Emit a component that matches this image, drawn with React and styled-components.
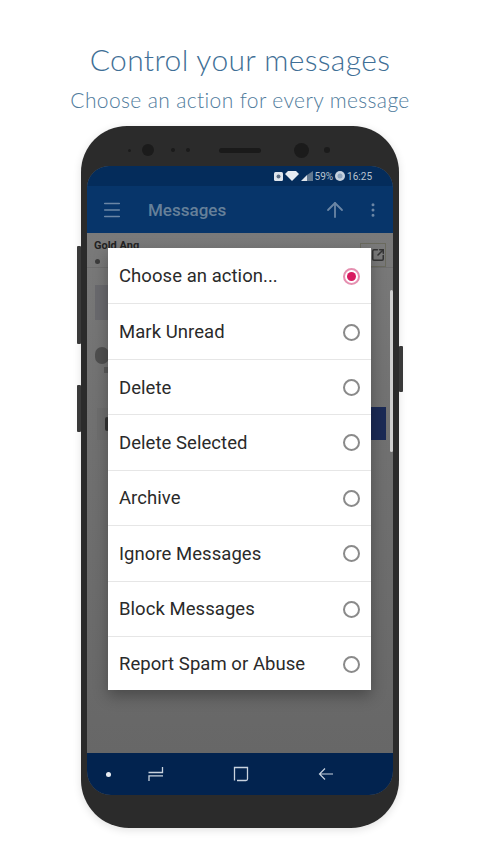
import React from 'react';
import styled, { createGlobalStyle } from 'styled-components';
import { Menu, ArrowUp, MoreVertical, SquareArrowOutUpRight } from 'lucide-react';

const Global = createGlobalStyle`
  html, body { margin: 0; padding: 0; background: #fff; }
  body { font-family: 'Roboto', 'Liberation Sans', sans-serif; }
`;

const Page = styled.div`
  width: 480px;
  height: 854px;
  overflow: hidden;
  display: flex;
  flex-direction: column;
  align-items: center;
  background: #fff;
`;

const Title = styled.h1`
  margin: 40px 0 0;
  font-family: 'Lato', 'Noto Sans', sans-serif;
  font-weight: 300;
  font-size: 30px;
  line-height: 38px;
  letter-spacing: 0.35px;
  color: #3f6f96;
`;

const Subtitle = styled.h2`
  margin: 8px 0 0;
  font-family: 'Lato', 'Noto Sans', sans-serif;
  font-weight: 300;
  font-size: 21px;
  line-height: 27px;
  letter-spacing: 0.37px;
  color: #4f7b9c;
`;

const Phone = styled.div`
  position: relative;
  margin-top: 13px;
  width: 318px;
  height: 702px;
  box-sizing: border-box;
  padding: 40px 6px 33px;
  border-radius: 46px 46px 48px 48px;
  background: #2b2b2b;
  box-shadow: 0 2px 8px rgba(0, 0, 0, 0.12);
`;

const SideKey = styled.span`
  position: absolute;
  top: ${p => p.$top}px;
  ${p => (p.$right ? 'right: -4px' : 'left: -4px')};
  width: 4px;
  height: ${p => p.$h}px;
  background: #3a3a3a;
  border-radius: 1px;
`;

const Sensors = styled.div`
  position: absolute;
  top: 14px;
  left: 47px;
  display: flex;
  align-items: center;
  height: 20px;
`;

const Dot = styled.span`
  width: ${p => p.$s}px;
  height: ${p => p.$s}px;
  margin-left: ${p => p.$ml || 0}px;
  border-radius: 50%;
  background: #1b1b1b;
`;

const Speaker = styled.span`
  width: 42px;
  height: 5px;
  margin-left: 29px;
  border-radius: 3px;
  background: #1a1a1a;
`;

const Screen = styled.div`
  position: relative;
  height: 629px;
  display: flex;
  flex-direction: column;
  overflow: hidden;
  border-radius: 22px 22px 24px 24px;
  background: #6b6b6b;
`;

const StatusBar = styled.div`
  height: 20px;
  flex: none;
  display: flex;
  align-items: center;
  justify-content: flex-end;
  gap: 2px;
  padding-right: 21px;
  background: #042c5b;
  color: #b9c3cf;
  font-size: 10px;
`;

const StatusIcon = styled.svg`
  display: block;
`;

const AppBar = styled.div`
  height: 47px;
  flex: none;
  display: flex;
  align-items: center;
  padding: 0 11px 0 14px;
  background: #07356a;
  color: #6b86a5;
`;

const AppTitle = styled.div`
  margin-left: 25px;
  flex: 1;
  font-size: 17px;
  font-weight: 500;
  color: #668099;
`;

const Overflow = styled.span`
  display: flex;
  margin-left: 17px;
`;

const Backdrop = styled.div`
  flex: 1;
  position: relative;
  background: linear-gradient(#7a7a7a, #727272 30%, #676767);
`;

const Peek = styled.div`
  height: 35px;
  padding: 6px 7px;
  box-sizing: border-box;
  border-bottom: 1px solid #6e6e6e;
  color: #222;
  font-size: 11px;
  font-weight: 700;
`;

const PeekDot = styled.span`
  position: absolute;
  top: 26px;
  left: 8px;
  width: 5px;
  height: 5px;
  border-radius: 50%;
  background: #3c3c3c;
`;

const PeekBlock = styled.div`
  position: absolute;
  top: ${p => p.$top}px;
  left: ${p => p.$left || 8}px;
  width: ${p => p.$w || 14}px;
  height: ${p => p.$h}px;
  background: ${p => p.$c};
  border-radius: ${p => p.$r || 0}px;
`;

const PeekButton = styled.div`
  position: absolute;
  top: 174px;
  right: 7px;
  width: 30px;
  height: 33px;
  background: #1b2a55;
`;

const PeekShare = styled.div`
  position: absolute;
  top: 10px;
  right: 7px;
  width: 26px;
  height: 24px;
  display: flex;
  align-items: center;
  justify-content: flex-end;
  box-sizing: border-box;
  border: 1px solid #6a6a5e;
  color: #333;
`;

const Scrollbar = styled.div`
  position: absolute;
  top: 57px;
  right: 0;
  width: 3px;
  height: 162px;
  border-radius: 2px;
  background: #cfcfcf;
`;

const Dialog = styled.div`
  position: absolute;
  top: 15px;
  left: 21px;
  width: 263px;
  background: #fff;
  box-shadow: 0 6px 14px rgba(0, 0, 0, 0.3);
`;

const Row = styled.div`
  height: 55.43px;
  box-sizing: border-box;
  display: flex;
  align-items: center;
  justify-content: space-between;
  padding: 1px 11px 0;
  border-top: ${p => (p.$first ? 'none' : '1px solid #e6e6e6')};
  font-size: 18.5px;
  letter-spacing: 0.05px;
  color: #2a2a2a;
  &:last-child {
    height: 54px;
    padding-top: 2px;
  }
`;

const Radio = styled.span`
  width: 17px;
  height: 17px;
  box-sizing: border-box;
  display: flex;
  align-items: center;
  justify-content: center;
  border-radius: 50%;
  border: 2px solid ${p => (p.$on ? '#e58fb0' : '#8a8a8a')};
  &::after {
    content: '';
    display: ${p => (p.$on ? 'block' : 'none')};
    width: 9px;
    height: 9px;
    border-radius: 50%;
    background: #d81b60;
  }
`;

const NavBar = styled.div`
  height: 42px;
  flex: none;
  display: flex;
  align-items: center;
  background: #02234f;
`;

const NavDot = styled.span`
  width: 5px;
  height: 5px;
  margin-left: 19px;
  border-radius: 50%;
  background: #e8edf3;
`;

const NavIcon = styled.svg`
  display: block;
  margin-left: ${p => p.$ml}px;
`;

const actions = [
  'Choose an action...',
  'Mark Unread',
  'Delete',
  'Delete Selected',
  'Archive',
  'Ignore Messages',
  'Block Messages',
  'Report Spam or Abuse',
];

export default function App() {
  return (
    <Page>
      <Global />
      <Title>Control your messages</Title>
      <Subtitle>Choose an action for every message</Subtitle>
      <Phone>
        <SideKey $top={120} $h={98} />
        <SideKey $top={259} $h={47} />
        <SideKey $right $top={220} $h={46} />
        <Sensors>
          <Dot $s={3} />
          <Dot $s={12} $ml={11} />
          <Dot $s={4} $ml={17} />
          <Dot $s={4} $ml={11} />
          <Speaker />
          <Dot $s={15} $ml={33} />
          <Dot $s={6} $ml={15} />
        </Sensors>
        <Screen>
          <StatusBar>
            <StatusIcon width="9" height="9" viewBox="0 0 9 9">
              <rect width="9" height="9" rx="1.5" fill="#dfe5ec" />
              <circle cx="4.5" cy="4.5" r="2" fill="#5a6b80" />
            </StatusIcon>
            <StatusIcon width="14" height="10" viewBox="0 0 14 10">
              <path d="M0 3 L3 0 H11 L14 3 L7 10 Z" fill="#e6ebf1" />
            </StatusIcon>
            <StatusIcon width="12" height="10" viewBox="0 0 12 10">
              <path d="M0 10 L6 4 V10 Z" fill="#dfe5ec" />
              <path d="M6 4 L12 0 V10 H6 Z" fill="#62788f" />
            </StatusIcon>
            <span>59%</span>
            <StatusIcon width="10" height="10" viewBox="0 0 10 10">
              <circle cx="5" cy="5" r="5" fill="#c6d2df" />
              <circle cx="5" cy="5" r="2.5" fill="#8fa6bf" />
            </StatusIcon>
            <span>16:25</span>
          </StatusBar>
          <AppBar>
            <Menu size={22} strokeWidth={1.6} />
            <AppTitle>Messages</AppTitle>
            <ArrowUp size={24} strokeWidth={1.8} />
            <Overflow>
              <MoreVertical size={18} strokeWidth={2} />
            </Overflow>
          </AppBar>
          <Backdrop>
            <Peek>Gold Ang</Peek>
            <PeekDot />
            <PeekShare>
              <SquareArrowOutUpRight size={14} strokeWidth={2.6} />
            </PeekShare>
            <PeekBlock $top={52} $h={35} $c="#69696d" />
            <PeekBlock $top={114} $h={17} $c="#4f4f4f" $r={7} />
            <PeekBlock $top={134} $left={17} $w={4} $h={6} $c="#5a5a5a" />
            <PeekBlock $top={175} $left={10} $w={12} $h={32} $c="#6d6d6d" />
            <PeekBlock $top={184} $left={18} $w={4} $h={14} $c="#333" $r={2} />
            <PeekButton />
            <Scrollbar />
            <Dialog>
              {actions.map((a, i) => (
                <Row key={a} $first={i === 0}>
                  {a}
                  <Radio $on={i === 0} />
                </Row>
              ))}
            </Dialog>
          </Backdrop>
          <NavBar>
            <NavDot />
            <NavIcon $ml={37} width="16" height="16" viewBox="0 0 16 16" fill="none" stroke="#c9d3df" strokeWidth="1.3">
              <path d="M14.5 1 V6.5 H0.5 M1 15 V9.8 H15" />
            </NavIcon>
            <NavIcon $ml={69} width="16" height="16" viewBox="0 0 16 16" fill="none" stroke="#c9d3df" strokeWidth="1.3">
              <path d="M1.5 14.5 V1.5 H14.5 V13 Q14.5 14.5 13 14.5 H4" />
            </NavIcon>
            <NavIcon $ml={69} width="16" height="16" viewBox="0 0 16 16" fill="none" stroke="#c9d3df" strokeWidth="1.2">
              <path d="M15 8 H1.5 M7 2.5 L1.5 8 L7 13.5" />
            </NavIcon>
          </NavBar>
        </Screen>
      </Phone>
    </Page>
  );
}
